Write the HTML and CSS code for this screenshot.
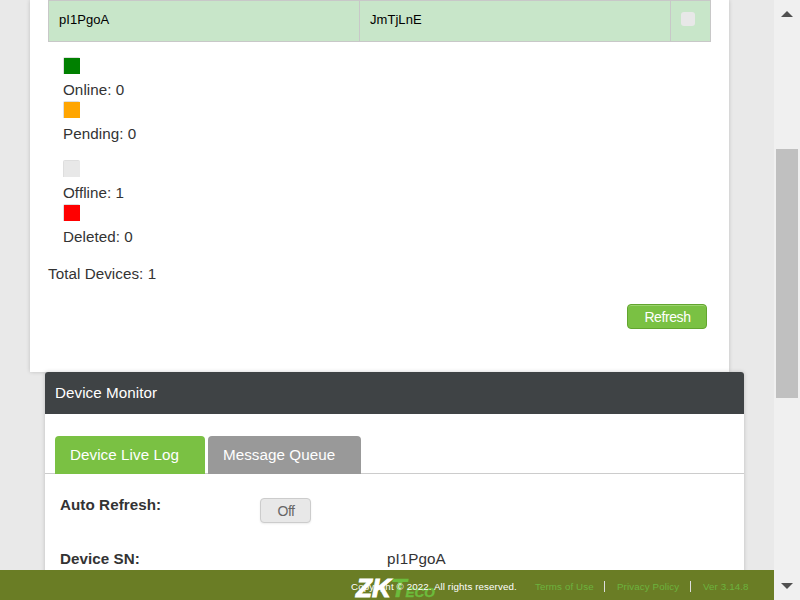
FILE: index.html
```html
<!DOCTYPE html>
<html lang="en">
<head>
<meta charset="utf-8">
<title>Devices</title>
<link rel="stylesheet" href="styles.css">
</head>
<body>
<div class="page">
  <main class="content">
    <section class="panel devices">
      <div class="row">
        <div class="cell">pI1PgoA</div>
        <div class="cell">JmTjLnE</div>
        <div class="cell state"><span class="chip"></span></div>
      </div>
      <div class="legend">
        <div class="item"><span class="swatch online"></span><span class="label">Online: 0</span></div>
        <div class="item"><span class="swatch pending"></span><span class="label">Pending: 0</span></div>
      </div>
      <div class="legend second">
        <div class="item"><span class="swatch"></span><span class="label">Offline: 1</span></div>
        <div class="item"><span class="swatch deleted"></span><span class="label">Deleted: 0</span></div>
      </div>
      <div class="total">Total Devices: 1</div>
      <div class="actions"><button class="btn primary">Refresh</button></div>
    </section>
    <section class="panel monitor">
      <h2 class="title">Device Monitor</h2>
      <nav class="tabs">
        <a class="tab active">Device Live Log</a>
        <a class="tab">Message Queue</a>
      </nav>
      <div class="field"><b class="name">Auto Refresh:</b><button class="btn">Off</button></div>
      <div class="field sn"><b class="name">Device SN:</b><span>pI1PgoA</span></div>
    </section>
  </main>
  <footer class="footer">
    <span class="copy">Copyright © 2022. All rights reserved.</span>
    <div class="logo"><span class="zk">ZK</span><span class="teco">T<small>ECO</small></span></div>
    <a class="link terms">Terms of Use</a>
    <a class="link privacy">Privacy Policy</a>
    <a class="link version">Ver 3.14.8</a>
  </footer>
</div>
<div class="scrollbar">
  <svg class="arrow" width="12" height="6"><path d="M0 6L6 0L12 6Z"/></svg>
  <div class="thumb"></div>
  <svg class="arrow down" width="12" height="6"><path d="M0 0H12L6 6Z"/></svg>
</div>
</body>
</html>
```
FILE: styles.css
```css
* { box-sizing: border-box; }
body {
  margin: 0;
  width: 800px;
  height: 600px;
  overflow: hidden;
  display: flex;
  background: #e9e9e9;
  color: #333;
  font: 15.2px/20px "Liberation Sans", Arial, sans-serif;
  letter-spacing: .06px;
}
.page { width: 774px; height: 600px; display: flex; flex-direction: column; }
.content { height: 570px; overflow: hidden; padding-left: 30px; }
.panel { width: 699px; background: #fff; box-shadow: 0 0 4px rgba(0,0,0,.18); }
.devices { height: 372px; padding: 0 18px; }
.row {
  width: 663px;
  height: 42px;
  display: grid;
  grid-template-columns: 311px 311px 39px;
  background: #c8e6c9;
  border: 1px solid #c8c8c8;
  color: #000;
  font-size: 13px;
  letter-spacing: .05px;
}
.cell { padding: 9px 10px; border-right: 1px solid #c8c8c8; }
.state { border-right: 0; padding: 11px 10px; }
.chip { display: block; width: 14px; height: 14px; border-radius: 3px; background: #e8e8e8; }
.legend { padding: 15px 0 0 15px; }
.item { height: 44px; }
.swatch {
  display: block;
  width: 17px;
  height: 17px;
  padding: 1px 0 0 1px;
  border-radius: 2px 2px 0 0;
  background: #dedede;
}
.swatch::before { content: ""; display: block; width: 16px; height: 16px; background: #e8e8e8; }
.online::before { background: green; }
.pending::before { background: orange; }
.deleted::before { background: red; }
.label { display: block; padding-top: 6px; }
.total { margin-top: 16px; }
.actions { margin-top: 20px; padding-right: 4px; display: flex; justify-content: flex-end; }
.btn {
  width: 51px;
  height: 25px;
  padding: 0 0 0 1px;
  border: 1px solid #ccc;
  border-radius: 4px;
  background: #e8e8e8;
  color: #666;
  font: 14px/22px "Liberation Sans", Arial, sans-serif;
  letter-spacing: -.4px;
  box-shadow: 0 1px 2px rgba(0,0,0,.08);
}
.primary {
  width: 80px;
  border-color: #62a52f;
  background: #7ac143;
  color: #fff;
  box-shadow: inset 0 1px 0 #9cd36f;
}
.monitor { margin-left: 15px; height: 240px; border-radius: 3px 3px 0 0; }
.title {
  margin: 0;
  height: 42px;
  padding-left: 10px;
  border-radius: 3px 3px 0 0;
  background: #3f4345;
  color: #fff;
  font-size: 15.2px;
  font-weight: normal;
  line-height: 42px;
}
.tabs {
  height: 60px;
  padding: 22px 10px 0;
  display: flex;
  gap: 3px;
  border-bottom: 1px solid #ccc;
}
.tab {
  width: 153px;
  height: 38px;
  padding-left: 15px;
  border-radius: 4px 4px 0 0;
  background: #999;
  color: #fff;
  line-height: 38px;
}
.active { width: 150px; background: #7ac143; }
.field { display: flex; padding: 21px 0 0 15px; height: 54px; }
.name { width: 200px; }
.field .btn { margin-top: 3px; }
.sn .name { width: 327px; }
.footer {
  position: relative;
  height: 30px;
  display: flex;
  background: #6a7d25;
  padding-left: 351px;
  font-size: 9.75px;
  line-height: 34px;
  letter-spacing: .11px;
  white-space: nowrap;
}
.copy { position: relative; z-index: 1; width: 184px; color: #fff; }
.link { color: #6cb33e; }
.terms { width: 82px; }
.privacy { width: 86px; }
.privacy, .version { position: relative; }
.version::before, .privacy::before {
  content: "";
  position: absolute;
  left: -13px;
  top: 11px;
  width: 1px;
  height: 11px;
  background: #ddd;
}
.logo {
  position: absolute;
  left: 356px;
  top: 4px;
  height: 26px;
  display: flex;
  font: italic bold 26px/28px "Liberation Sans", Arial, sans-serif;
  letter-spacing: 0;
}
.zk { color: #fff; -webkit-text-stroke: 1px #fff; }
.teco { color: #6cbc3c; -webkit-text-stroke: .4px #6cbc3c; }
.teco small { font-size: 13.5px; margin-left: -1px; }
.scrollbar {
  width: 26px;
  height: 600px;
  display: flex;
  flex-direction: column;
  background: #f0f0f0;
}
.arrow { margin: 11px 0 0 7px; fill: #505050; flex: none; }
.thumb { width: 22px; height: 249px; margin: 132px 0 0 2px; background: #c0c0c0; }
.down { margin-top: 185px; }
```
